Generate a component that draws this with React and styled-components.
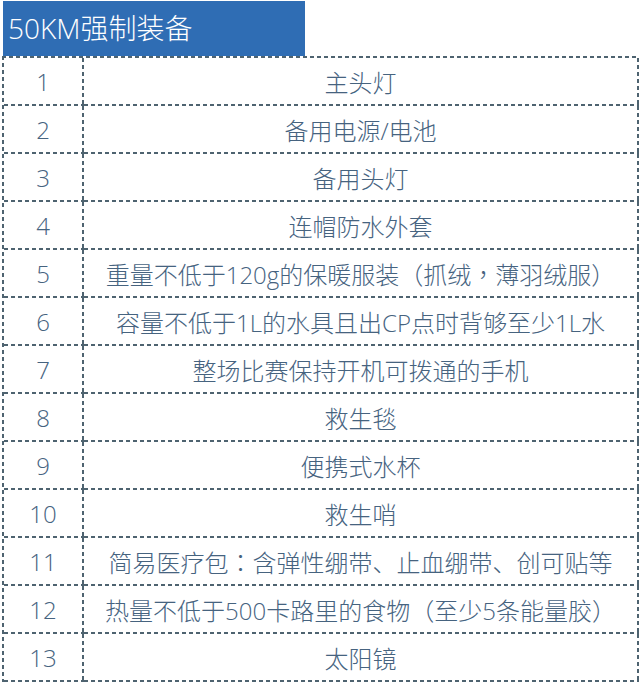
import React from "react";
import styled, { createGlobalStyle } from "styled-components";

const GlobalStyle = createGlobalStyle`
  html, body { margin: 0; padding: 0; background: #ffffff; }
  body { font-family: "Open Sans", "Noto Sans CJK SC", sans-serif; }
`;

const LINE = "#4e6370";
const dashH = `repeating-linear-gradient(to right, ${LINE} 0 4px, transparent 4px 7px)`;
const dashV = `repeating-linear-gradient(to bottom, ${LINE} 0 4px, transparent 4px 7px)`;

const Page = styled.div`
  width: 640px;
  padding: 1px 0 0 2px;
  box-sizing: border-box;
`;

const Title = styled.div`
  width: 302px;
  height: 55px;
  margin-left: 1px;
  background: #2f6db4;
  color: #ffffff;
  font-size: 28px;
  font-weight: 300;
  line-height: 55px;
  padding-left: 5px;
  box-sizing: border-box;
  font-family: "Open Sans", "Noto Sans CJK SC", sans-serif;
`;

const Table = styled.div`
  width: 637px;
  padding-top: 2px;
  padding-left: 2px;
  box-sizing: border-box;
  background: ${dashH} top left / 100% 2px no-repeat,
    ${dashV} top left / 2px 100% no-repeat;
`;

const Row = styled.div`
  display: grid;
  grid-template-columns: 80px 1fr;
  height: 48px;
`;

const Cell = styled.div`
  display: flex;
  align-items: center;
  justify-content: center;
  box-sizing: border-box;
  padding: 0 2px 2px 0;
  background: ${dashH} bottom left / 100% 2px no-repeat,
    ${dashV} top right / 2px 100% no-repeat;
  color: #46637f;
  font-size: 24px;
  font-weight: 300;
  white-space: pre;
  font-family: "Open Sans", "Noto Sans CJK SC", sans-serif;
`;

const Punct = styled.span`
  font-family: ${(p) => (p.$paren ? '"Noto Sans CJK KR"' : '"Noto Sans CJK TC"')}, sans-serif;
`;

const CENTERED = /([（）：，])/;

function Text({ children }) {
  return children
    .split(CENTERED)
    .filter(Boolean)
    .map((part, i) =>
      CENTERED.test(part) ? (
        <Punct key={i} $paren={part === "（" || part === "）"}>
          {part}
        </Punct>
      ) : (
        <span key={i}>{part}</span>
      )
    );
}

const items = [
  "主头灯",
  "备用电源/电池",
  "备用头灯",
  "连帽防水外套",
  "重量不低于120g的保暖服装（抓绒，薄羽绒服）",
  "容量不低于1L的水具且出CP点时背够至少1L水",
  "整场比赛保持开机可拨通的手机",
  "救生毯",
  "便携式水杯",
  "救生哨",
  "简易医疗包：含弹性绷带、止血绷带、创可贴等",
  "热量不低于500卡路里的食物（至少5条能量胶）",
  "太阳镜",
];

export default function App() {
  return (
    <>
      <GlobalStyle />
      <Page>
        <Title>50KM强制装备</Title>
        <Table>
          {items.map((t, i) => (
            <Row key={i}>
              <Cell>{i + 1}</Cell>
              <Cell>
                <Text>{t}</Text>
              </Cell>
            </Row>
          ))}
        </Table>
      </Page>
    </>
  );
}
